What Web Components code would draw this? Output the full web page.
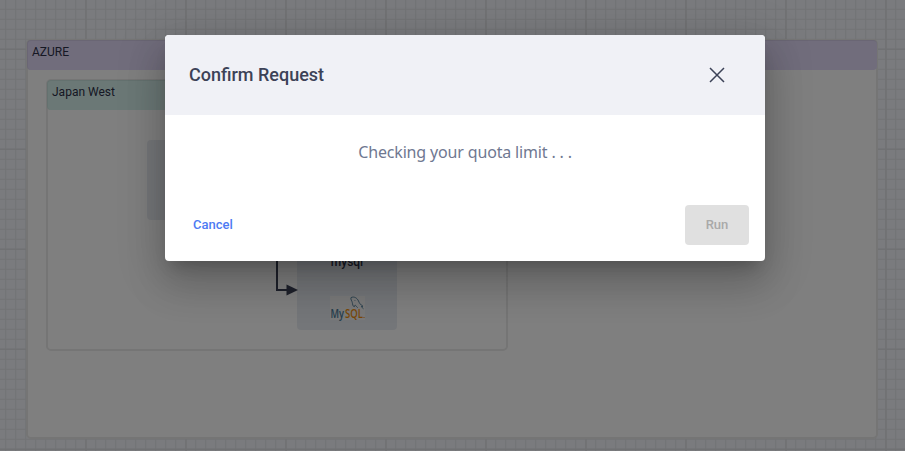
<!DOCTYPE html>
<html lang="en">
<head>
<meta charset="utf-8">
<title>Confirm Request</title>
<style>
html,body{margin:0;height:100%;overflow:hidden;font-family:Roboto,"Liberation Sans",sans-serif}
</style>
</head>
<body>
<app-shell></app-shell>
<script>
const define = (name, html) => customElements.define(name, class extends HTMLElement {
  constructor() {
    super();
    const t = document.createElement('template');
    t.innerHTML = html;
    this.attachShadow({ mode: 'open' }).appendChild(t.content.cloneNode(true));
  }
});

define('cloud-group', `
<style>
:host{display:block;position:absolute;box-sizing:border-box;border:2px solid var(--edge,#eaeaea);border-radius:5px;background:#fff}
header{box-sizing:border-box;margin:-1px -1px 0;height:30px;padding:4px 0 0 4px;border-radius:4px;background:var(--head);border-top:1px solid var(--head-edge);border-left:1px solid var(--head-edge);font-size:12px;line-height:14px;color:#2d3148}
</style>
<header><slot></slot></header>`);

define('mysql-logo', `
<style>:host{display:block;width:35px;height:24px}svg{display:block;overflow:visible}</style>
<svg width="35" height="24" viewBox="0 0 35 24">
<rect width="35" height="24" fill="#f5f5f5"/>
<path d="M21 1.600c3-1.500 6 .2 7.500 3.400 1 2.200 1.700 3.500 4.500 5.300l-1.800.3 2.300 2.200M21 1.600c-.6 2 .9 3 1.300 5 .3 1.500.5 3.500 1.700 4.200.8.3.4-1.800 1.200-1.600.8.3 1.300 1.800 2.500 2.500M24.500 4l.6.700" fill="none" stroke="#5d87a1" stroke-width="1"/>
<text x="0.500" y="22" font-family="Open Sans,sans-serif" font-size="12" font-weight="600" fill="#4f7d9b" textLength="13.500" lengthAdjust="spacingAndGlyphs">My</text>
<text x="15" y="22" font-family="Open Sans,sans-serif" font-size="12" font-weight="600" fill="#f29111" textLength="18" lengthAdjust="spacingAndGlyphs">SQL</text>
<path d="M33.500 21.500h1" stroke="#f29111"/>
</svg>`);

define('resource-node', `
<style>
:host{display:flex;position:absolute;flex-direction:column;align-items:center;box-sizing:border-box;width:100px;height:80px;padding-top:5px;border-radius:4px;background:#e9edf3;font-size:12px;line-height:14px;font-weight:500;color:#2d3148}
::slotted(mysql-logo){margin:27px 0 0 1px}
</style><slot></slot>`);

define('flow-arrow', `
<style>:host{display:block;position:absolute;width:40px;height:60px}svg{display:block}</style>
<svg width="40" height="60"><path d="M7 0v50h10" fill="none" stroke="#3c4257" stroke-width="2"/><path d="M16.500 44.500 28 50l-11.500 5.500z" fill="#3c4257"/></svg>`);

define('diagram-canvas', `
<style>
:host{display:block;position:absolute;inset:0;background:#f4f7fc}
.grid{display:block;position:absolute;inset:0}
.azure{left:26px;top:39px;width:852px;height:400px;--head:#e2dbf9;--head-edge:#d4cde8}
.west{left:46px;top:79px;width:462px;height:272px;--head:#d7f1ed;--head-edge:#c8e2de}
.source{left:147px;top:140px}
.db{left:297px;top:250px}
flow-arrow{left:270px;top:240px}
</style>
<svg class="grid" width="905" height="451">
<defs>
<pattern id="minor" x="5" y="8" width="10" height="10" patternUnits="userSpaceOnUse"><path d="M.700 0v10M0 1.300h10" stroke="#e6e8ec" stroke-width="1.100"/></pattern>
<pattern id="major" x="85" y="48" width="100" height="100" patternUnits="userSpaceOnUse"><path d="M1 0v100M0 1.300h100" stroke="#e1e3e7" stroke-width="1.500"/></pattern>
</defs>
<rect width="905" height="451" fill="url(#minor)"/><rect width="905" height="451" fill="url(#major)"/>
</svg>
<cloud-group class="azure">AZURE</cloud-group>
<cloud-group class="west">Japan West</cloud-group>
<resource-node class="source"></resource-node>
<resource-node class="db">mysql<mysql-logo></mysql-logo></resource-node>
<flow-arrow></flow-arrow>`);

define('confirm-dialog', `
<style>
:host{display:flex;flex-direction:column;width:600px;height:226px;border-radius:4px;background:#fff;overflow:hidden;box-shadow:0 11px 15px -7px rgba(0,0,0,.2),0 24px 38px 3px rgba(0,0,0,.14),0 9px 46px 8px rgba(0,0,0,.12)}
header{display:flex;align-items:center;justify-content:space-between;box-sizing:border-box;height:80px;padding:0 40px 0 24px;background:#f0f1f6;color:#3c4257}
h2{margin:0;font-size:18px;font-weight:500;line-height:24px}
svg{display:block}
p{margin:0;padding-top:25px;height:65px;box-sizing:content-box;text-align:center;font:16px/24px "Noto Sans",sans-serif;letter-spacing:-.16px;color:#6f7891}
footer{display:flex;justify-content:space-between;padding:0 16px 0 20px}
button{border:0;border-radius:4px;height:40px;font:500 13px/20px Roboto,sans-serif;padding:0}
.cancel{width:56px;padding:0 8px;text-align:left;background:none;color:#4d7bf3}
.run{width:64px;background:#e0e0e0;color:#a9a9a9}
</style>
<header><h2><slot name="title"></slot></h2>
<svg width="16" height="16" viewBox="0 0 16 16"><path d="m1 1 14 14M15 1 1 15" fill="none" stroke="#3c4257" stroke-width="1.500"/></svg></header>
<p><slot></slot></p>
<footer><button class="cancel">Cancel</button><button class="run" disabled>Run</button></footer>`);

define('app-shell', `
<style>
:host{display:block;position:relative;height:451px;overflow:hidden}
.overlay{position:absolute;inset:0;display:flex;justify-content:center;align-items:flex-start;box-sizing:border-box;padding:35px 0 0 25px;background:rgba(0,0,0,.5)}
</style>
<diagram-canvas></diagram-canvas>
<div class="overlay"><confirm-dialog><span slot="title">Confirm Request</span>Checking your quota limit . . .</confirm-dialog></div>`);
</script>
</body>
</html>
